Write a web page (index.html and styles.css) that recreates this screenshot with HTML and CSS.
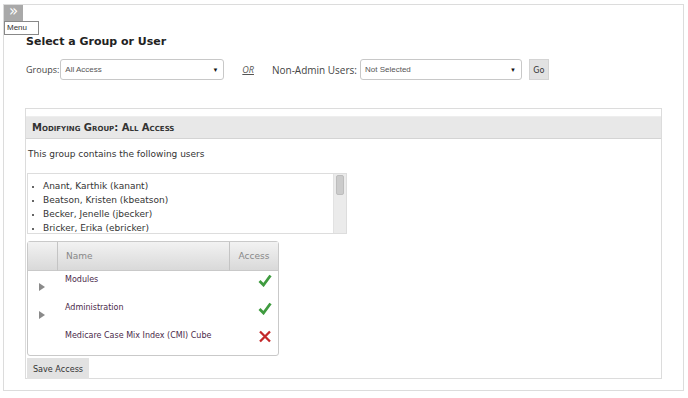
FILE: index.html
```html
<!DOCTYPE html>
<html>
  <head>
    <title>Group access</title>
    <link rel="stylesheet" href="styles.css">
  </head>
  <body>
    <div class="frame">
      <div class="menu-toggle">&raquo;</div>
      <div class="menu-tip">Menu</div>

      <h1 class="title">Select a Group or User</h1>

      <div class="pickers">
        <label class="pick-label">Groups:</label>
        <div class="select groups"><span>All Access</span><span class="caret">&#9660;</span></div>
        <span class="or">OR</span>
        <label class="pick-label">Non-Admin Users:</label>
        <div class="select users"><span>Not Selected</span><span class="caret">&#9660;</span></div>
        <button class="btn go">Go</button>
      </div>

      <div class="panel">
        <div class="panel-head">Modifying Group: All Access</div>
        <p class="intro">This group contains the following users</p>

        <div class="user-box">
          <ul class="users-list">
            <li>Anant, Karthik (kanant)</li>
            <li>Beatson, Kristen (kbeatson)</li>
            <li>Becker, Jenelle (jbecker)</li>
            <li>Bricker, Erika (ebricker)</li>
          </ul>
          <div class="scroll"><div class="thumb"></div></div>
        </div>

        <table class="access">
          <thead>
            <tr><th class="c-arrow"></th><th class="c-name">Name</th><th class="c-access">Access</th></tr>
          </thead>
          <tbody>
            <tr>
              <td class="c-arrow"><span class="tri"></span></td>
              <td class="c-name">Modules</td>
              <td class="c-access">
                <svg class="mark" width="14" height="13" viewBox="0 0 14 13"><path d="M1.5 7 L5.5 11 L12.5 1.5" fill="none" stroke="#3f9b3f" stroke-width="2.8"/></svg>
              </td>
            </tr>
            <tr>
              <td class="c-arrow"><span class="tri"></span></td>
              <td class="c-name">Administration</td>
              <td class="c-access">
                <svg class="mark" width="14" height="13" viewBox="0 0 14 13"><path d="M1.5 7 L5.5 11 L12.5 1.5" fill="none" stroke="#3f9b3f" stroke-width="2.8"/></svg>
              </td>
            </tr>
            <tr>
              <td class="c-arrow"></td>
              <td class="c-name">Medicare Case Mix Index (CMI) Cube</td>
              <td class="c-access">
                <svg class="mark" width="14" height="13" viewBox="0 0 14 13"><path d="M2 1.5 L12 11.5 M12 1.5 L2 11.5" fill="none" stroke="#c4282a" stroke-width="2.3"/></svg>
              </td>
            </tr>
          </tbody>
        </table>

        <button class="btn save">Save Access</button>
      </div>
    </div>
  </body>
</html>
```

FILE: styles.css
```css
body {
  margin: 0;
  background: #fff;
  font-family: "DejaVu Sans", Verdana, sans-serif;
  color: #333;
}

.frame {
  position: relative;
  margin: 4px 4px 0 3px;
  height: 387px;
  box-sizing: border-box;
  border: 1px solid #dcdcdc;
  padding: 29px 0 0 22px;
}

.menu-toggle {
  position: absolute;
  left: 0;
  top: 0;
  width: 19px;
  height: 16px;
  background: #a9a9a9;
  color: #fff;
  font-size: 15px;
  line-height: 13px;
  text-align: center;
}
.menu-tip {
  position: absolute;
  left: 0;
  top: 16px;
  width: 31px;
  height: 12px;
  border: 1px solid #888;
  background: #fff;
  font-family: "Liberation Sans", Arial, sans-serif;
  font-size: 8px;
  line-height: 12px;
  padding-left: 2px;
  color: #333;
}

.title {
  margin: 0;
  font-size: 11px;
  line-height: 16px;
  font-weight: bold;
  color: #222;
}

.pickers {
  display: flex;
  align-items: center;
  margin-top: 9px;
  height: 21px;
}
.pick-label {
  font-family: "Open Sans", sans-serif;
  font-size: 9px;
  color: #444;
}
.select {
  display: flex;
  align-items: center;
  justify-content: space-between;
  box-sizing: border-box;
  height: 21px;
  border: 1px solid #c8c8c8;
  border-radius: 3px;
  padding: 0 5px 0 4px;
  font-family: "Liberation Sans", Arial, sans-serif;
  font-size: 8px;
  color: #555;
  background: #fff;
}
.groups {
  width: 164px;
  margin-left: 1px;
}
.users {
  width: 162px;
  margin-left: 3px;
}
.caret {
  font-size: 6px;
  color: #111;
}
.or {
  margin: 0 18px 0 18px;
  font-family: "Open Sans", sans-serif;
  font-size: 9px;
  font-style: italic;
  text-decoration: underline;
  color: #555;
}
.or + .pick-label {
  font-size: 10px;
}

.btn {
  box-sizing: border-box;
  border: 1px solid #d4d4d4;
  background: #e2e2e2;
  color: #333;
  padding: 0;
  font-family: "DejaVu Sans Condensed", "DejaVu Sans", sans-serif;
  font-stretch: condensed;
}
.go {
  width: 20px;
  height: 21px;
  margin-left: 7px;
  font-size: 9px;
}

.panel {
  margin: 28px 0 0 -1px;
  width: 637px;
  height: 271px;
  box-sizing: border-box;
  border: 1px solid #dcdcdc;
  padding-top: 7px;
}
.panel-head {
  height: 23px;
  box-sizing: border-box;
  background: #e8e8e8;
  border-top: 1px solid #eee;
  border-bottom: 1px solid #d4d4d4;
  padding-left: 6px;
  font-size: 10px;
  line-height: 21px;
  font-weight: bold;
  font-variant: small-caps;
  color: #333;
}
.intro {
  margin: 10px 0 0 2px;
  font-size: 9px;
  line-height: 11px;
}

.user-box {
  display: flex;
  margin: 13px 0 0 1px;
  width: 320px;
  height: 61px;
  box-sizing: border-box;
  border: 1px solid #ddd;
  overflow: hidden;
}
.users-list {
  flex: 1;
  margin: 0;
  padding: 5px 0 0 15px;
  font-size: 9px;
  line-height: 14px;
}
.users-list li::marker {
  font-size: 8px;
}
.scroll {
  width: 12px;
  background: #ebebeb;
  border-left: 1px solid #e2e2e2;
}
.thumb {
  margin: 1px 2px;
  height: 20px;
  border-radius: 2px;
  background: #cbcbcb;
  border: 1px solid #bdbdbd;
  box-sizing: border-box;
}

.access {
  margin: 7px 0 0 1px;
  width: 252px;
  border: 1px solid #c9c9c9;
  border-collapse: separate;
  border-spacing: 0;
  border-radius: 3px;
  font-size: 8px;
}
.access th {
  height: 28px;
  padding: 0;
  background: linear-gradient(#f2f2f2, #d9d9d9);
  font-weight: normal;
  color: #888;
  font-size: 9px;
  text-align: left;
  border-bottom: 1px solid #c9c9c9;
}
.access th + th {
  border-left: 1px solid #c4c4c4;
}
.access th.c-name {
  padding-left: 8px;
}
.access th.c-access {
  text-align: center;
}
.c-arrow {
  width: 29px;
}
.c-access {
  width: 48px;
  text-align: center;
}
.access td {
  height: 24px;
  padding: 4px 0 0 0;
  vertical-align: top;
  line-height: 10px;
}
.access td.c-name {
  padding-left: 8px;
  color: #4a2a4a;
}
.access td.c-access {
  padding: 3px 0 0 0;
}
.mark {
  display: block;
  margin: 0 6px 0 auto;
}
.tri {
  display: inline-block;
  margin: 8px 0 0 11px;
  border-left: 6px solid #8a8a8a;
  border-top: 4px solid transparent;
  border-bottom: 4px solid transparent;
}

.save {
  display: block;
  margin: 2px 0 0 1px;
  width: 62px;
  height: 21px;
  font-size: 9px;
  border-color: #e2e2e2;
}
```
